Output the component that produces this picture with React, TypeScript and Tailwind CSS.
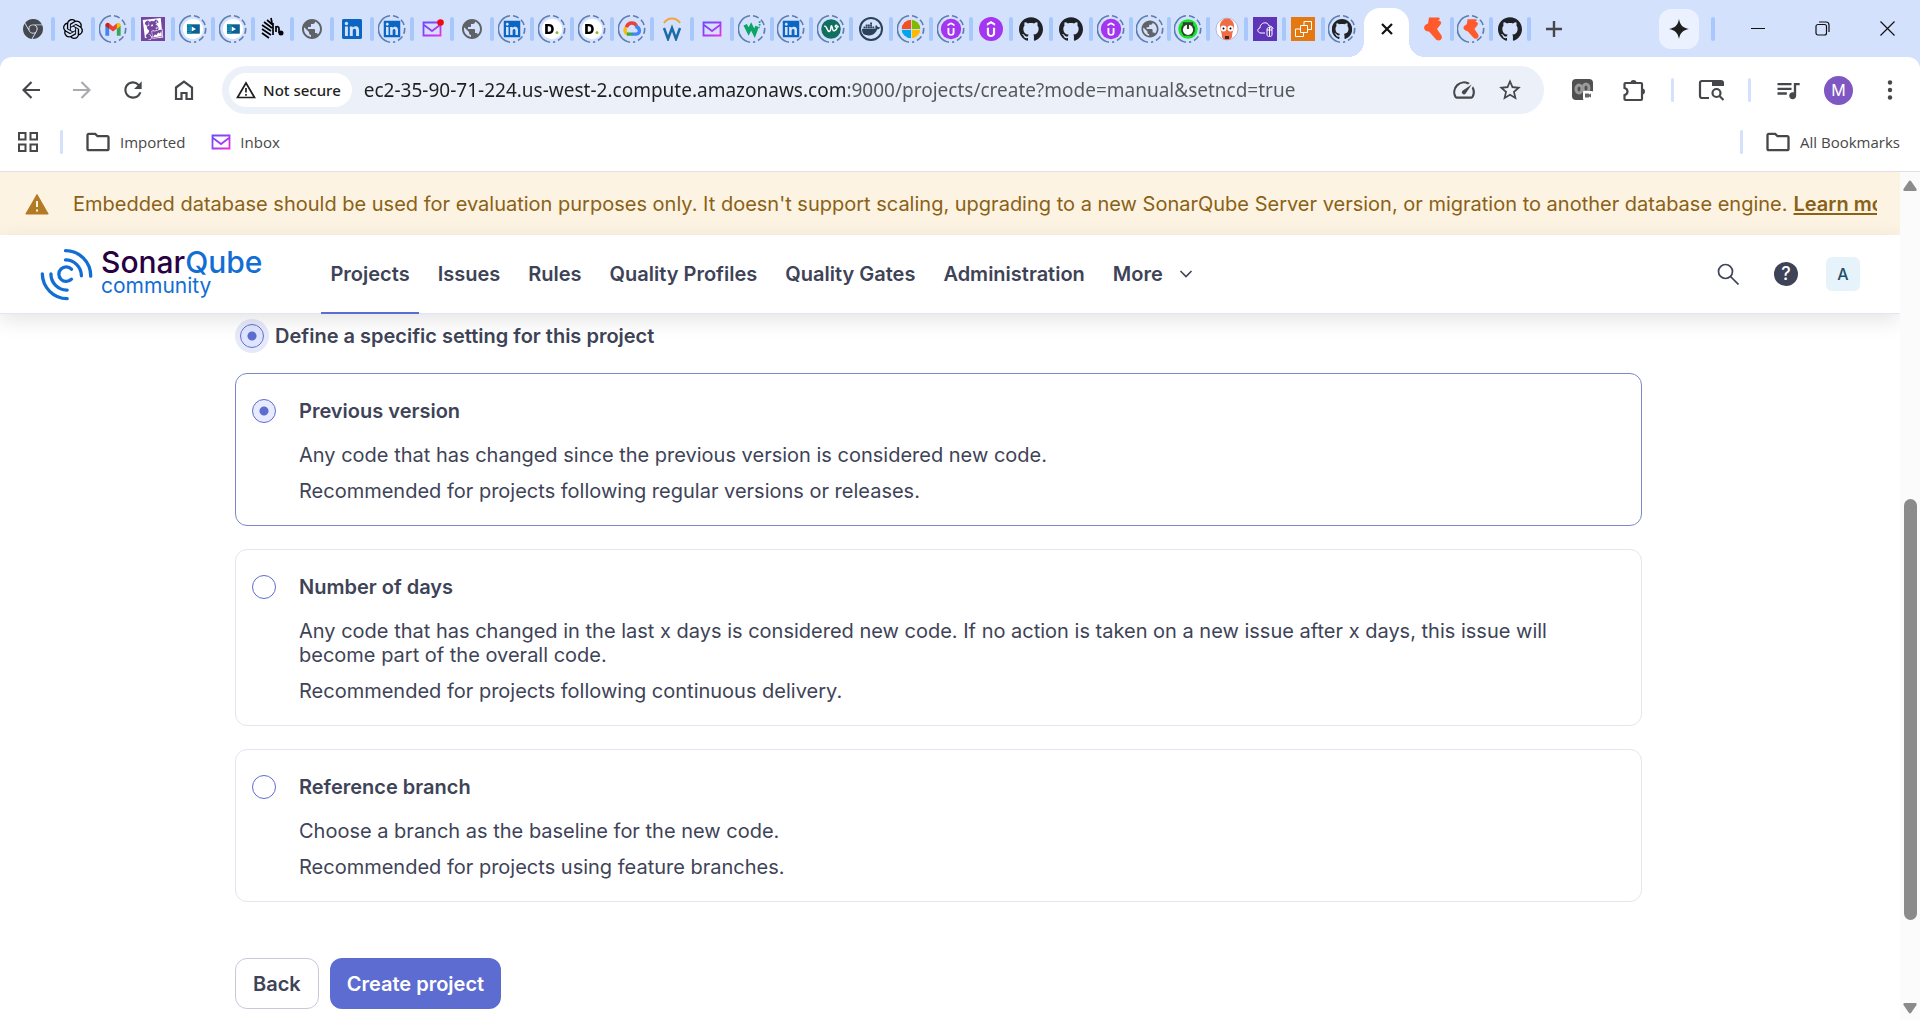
import { useState, type ReactNode } from "react";
import { SiDatadog, SiDocker, SiGithub, SiGooglechrome, SiLinkedin, SiOpenai, SiUdemy } from "react-icons/si";
import { MdOutlineFolder, MdOutlineSpeed, MdPublic, MdQueueMusic, MdRefresh, MdStarBorder } from "react-icons/md";

/* ---------- Favicons ---------- */

const Chrome = () => <SiGooglechrome className="size-5 text-[#45494d]" />;
const OpenAi = () => <SiOpenai className="size-5 text-black" />;
const Globe = () => <MdPublic className="size-6 text-[#5f6368]" />;
const LinkedIn = () => <SiLinkedin className="size-5 text-[#0a66c2]" />;
const GitHub = () => <SiGithub className="size-6 text-[#1f2328]" />;
const Datadog = () => (
  <span className="flex size-6 items-center justify-center bg-[#7446a0]">
    <SiDatadog className="size-[22px] text-white" />
  </span>
);
const Udemy = () => (
  <span className="flex size-6 items-center justify-center rounded-full bg-[#a435f0]">
    <SiUdemy className="size-4 text-white" />
  </span>
);
const Gmail = () => (
  <svg viewBox="0 0 24 24" className="size-6" fill="none">
    <path d="M3 8v12h4.500v-9z" fill="#4285f4" />
    <path d="M21 8v12h-4.500v-9z" fill="#34a853" />
    <path d="M7 5l5 4 5-4v6l-5 4-5-4z" fill="#ea4335" />
    <path d="M16.500 5.300C18.500 3.500 21 5 21 7.500v1L16.500 12z" fill="#fbbc04" />
    <path d="M7.500 5.300C5.500 3.500 3 5 3 7.500v1L7.500 12z" fill="#c5221f" />
  </svg>
);
const Course = () => (
  <svg viewBox="0 0 24 24" className="size-6">
    <circle cx="12" cy="12" r="12" fill="#fff" />
    <rect x="5" y="6.500" width="15" height="11" fill="#0b5f92" />
    <path d="M5 6.500h5v11H5z" fill="#1593ba" />
    <path d="M5 9h4M5 12h3M5 15h4" stroke="#0b5f92" />
    <path d="M10.500 9v6l5-3z" fill="#fff" />
  </svg>
);
const Stripes = () => (
  <svg viewBox="0 0 24 24" className="size-6" fill="none" stroke="#000" strokeWidth="1.700">
    <path d="M11 1l1 5M7 3l6 5M4 5l8 6M2 8l9 6M2 12l9 6M2 16l7 5M13 6v12M16 9v6M16 10c2-1 3 0 3 2v4" />
    <circle cx="21" cy="16" r="2.500" fill="#000" stroke="none" />
  </svg>
);
const Mail = ({ dot = false }: { dot?: boolean }) => (
  <svg viewBox="0 0 24 24" className="size-6" fill="none">
    <defs>
      <linearGradient id="mail-ink" x1="0" y1="0" x2="1" y2="1">
        <stop offset="0" stopColor="#6d4aff" />
        <stop offset="0.5" stopColor="#9b3df5" />
        <stop offset="1" stopColor="#f02fe0" />
      </linearGradient>
    </defs>
    <path d="M3.500 5.500h17v13h-17zM4 8l8 6 8-6" stroke="url(#mail-ink)" strokeWidth="1.800" />
    {dot && <circle cx="20.500" cy="5.500" r="3.300" fill="#f5090f" />}
  </svg>
);
const LetterD = () => (
  <span className="flex size-6 items-center justify-center rounded-full bg-white font-['Inter',sans-serif] text-base font-black text-black">
    D<span className="text-[#86bc25]">.</span>
  </span>
);
const Cloud = () => (
  <svg viewBox="0 0 24 24" className="size-6" fill="none" strokeWidth="4">
    <path d="M7 18a4.500 4.500 0 0 1-2-7.500" stroke="#fbbc04" />
    <path d="M5.500 10C7 4 15 3 17.500 9" stroke="#ea4335" />
    <path d="M16 9c6 1 6 9 1 9h-5" stroke="#4285f4" />
    <path d="M12.500 18H6" stroke="#34a853" />
  </svg>
);
const ArcW = () => (
  <svg viewBox="0 0 24 24" className="size-6" fill="none">
    <path d="M4 6c4-6 12-6 16 0" stroke="#f2a33c" strokeWidth="2" />
    <path d="M4 11l4 11 4-11 4 11 4-11" stroke="#1c6ba8" strokeWidth="2.500" />
  </svg>
);
const GreenW = () => (
  <svg viewBox="0 0 24 24" className="size-6" fill="none">
    <path d="M4 7l4 8 3-6 4 8 3-8" stroke="#0aa566" strokeWidth="4.500" />
    <path d="M20 4h2M20 7h2M20 10h1" stroke="#0aa566" strokeWidth="2" />
  </svg>
);
const Teal = () => (
  <svg viewBox="0 0 24 24" className="size-6" fill="none">
    <circle cx="12" cy="12" r="11.500" fill="#10705f" />
    <path d="M4 9c3-2 3 6 6 6 3-1 1-7 2.500-7S13 15 16 14c4-1 4-7 2-6.500S17 12 21 9" stroke="#fff" strokeWidth="1.700" />
  </svg>
);
const Docker = () => (
  <span className="flex size-6 items-center justify-center rounded-full border-2 border-[#2b4358]">
    <SiDocker className="size-[18px] text-[#2b4358]" />
  </span>
);
const Windows = () => (
  <span className="grid size-[22px] grid-cols-2 gap-px overflow-hidden rounded-full">
    <i className="bg-[#f25022]" />
    <i className="bg-[#7fba00]" />
    <i className="bg-[#00a4ef]" />
    <i className="bg-[#ffb900]" />
  </span>
);
const Timer = () => (
  <svg viewBox="0 0 24 24" className="size-6">
    <circle cx="12" cy="12" r="11.500" fill="#14e62a" />
    <path d="M6 4h12v3l2 3v5l-3 5H7l-3-5v-5l2-3z" fill="#33402f" />
    <circle cx="12" cy="13" r="6" fill="#fff" />
    <path d="M12 6v6" stroke="#33402f" strokeWidth="2.500" />
  </svg>
);
const Argo = () => (
  <svg viewBox="0 0 24 24" className="size-6">
    <circle cx="12" cy="12" r="11" fill="#fff" stroke="#b7b6dd" />
    <path d="M5 9c0-10 14-10 14 0 0 4-2 6-2 11-1 4-9 4-10 0 0-5-2-7-2-11z" fill="#ef6c45" />
    <circle cx="8.500" cy="11.500" r="3" fill="#fff" />
    <circle cx="15.500" cy="11.500" r="3" fill="#fff" />
    <circle cx="8.500" cy="11.500" r="1" />
    <circle cx="15.500" cy="11.500" r="1" />
    <path d="M10 19h4v3h-4z" fill="#3a2522" />
  </svg>
);
const CloudServer = () => (
  <svg viewBox="0 0 24 24" className="size-6" fill="none" stroke="#fff">
    <path d="M0 0h24v24H0z" fill="#5f35b8" stroke="none" />
    <path d="M12 16H8c-4 0-4-5-1-5 0-6 8-7 9-2 3 0 4 2 4 3" />
    <path d="M14 12c0-2 5-2 5 0v6c0 2-5 2-5 0zM14 13h5M16.500 10v9" />
  </svg>
);
const Compute = () => (
  <svg viewBox="0 0 24 24" className="size-6" fill="none" stroke="#fff">
    <path d="M0 0h24v24H0z" fill="#e47911" stroke="none" />
    <path d="M9.500 8.500h7v7h-7zM9 12H4.500v7.500h8V16M13 8V4.500h7.500v8H17" />
  </svg>
);
const Bird = () => (
  <svg viewBox="0 0 24 24" className="size-6" fill="#ff5a2c">
    <path d="M8 .5h10l1 1.500-2 1.500c3 .5 4 2 2.500 4L16 12l4.500 6.500c1.500 3.500-1.500 6-5 4.500L8 14.500c-4 0-7-4-3-7l2-1z" />
  </svg>
);

function Sleeping({ children }: { children: ReactNode }) {
  return (
    <span className="relative flex size-7 items-center justify-center">
      <svg viewBox="0 0 28 28" className="absolute size-7" fill="none" stroke="#5b7db1" strokeWidth="1.600">
        <path d="M12 27.200A13.300 13.300 0 0 1 12 .8" />
        <path d="M15 .8A13.300 13.300 0 0 1 15 27.200" strokeDasharray="6 3" />
      </svg>
      <span className="scale-[.85]">{children}</span>
    </span>
  );
}

type Tab = { name: string; icon: ReactNode; asleep?: boolean };
const tab = (name: string, icon: ReactNode, asleep = false): Tab => ({ name, icon, asleep });

const firstTabs: Tab[] = [
  tab("Chrome", <Chrome />),
  tab("ChatGPT", <OpenAi />),
  tab("Gmail", <Gmail />, true),
  tab("Datadog", <Datadog />),
  tab("Course", <Course />, true),
  tab("Course", <Course />, true),
  tab("Portal", <Stripes />),
  tab("Web page", <Globe />),
  tab("LinkedIn", <LinkedIn />),
  tab("LinkedIn", <LinkedIn />, true),
  tab("New mail", <Mail dot />),
  tab("Web page", <Globe />),
  tab("LinkedIn", <LinkedIn />, true),
  tab("Careers", <LetterD />, true),
  tab("Careers", <LetterD />, true),
  tab("Google Cloud", <Cloud />, true),
  tab("Jobs", <ArcW />),
  tab("Mail", <Mail />),
  tab("Tutorials", <GreenW />, true),
  tab("LinkedIn", <LinkedIn />, true),
  tab("Recruiting", <Teal />, true),
  tab("Docker", <Docker />),
  tab("Microsoft", <Windows />, true),
  tab("Udemy", <Udemy />, true),
  tab("Udemy", <Udemy />),
  tab("GitHub", <GitHub />),
  tab("GitHub", <GitHub />),
  tab("Udemy", <Udemy />, true),
];
const secondTabs: Tab[] = [
  tab("Web page", <Globe />, true),
  tab("Timer", <Timer />, true),
  tab("Argo CD", <Argo />),
  tab("Cloud server", <CloudServer />),
  tab("Compute", <Compute />),
  tab("GitHub", <GitHub />, true),
];
const lastTabs: Tab[] = [tab("Packages", <Bird />), tab("Packages", <Bird />, true), tab("GitHub", <GitHub />)];

function TabGroup({ tabs, closeLast = true }: { tabs: Tab[]; closeLast?: boolean }) {
  return tabs.map((t, i) => (
    <button key={i} aria-label={t.name} className="relative flex h-8 flex-1 items-center justify-center">
      {t.asleep ? <Sleeping>{t.icon}</Sleeping> : t.icon}
      {(closeLast || i < tabs.length - 1) && (
        <span className="absolute -right-0.5 h-6 w-1 rounded-full bg-[#a8c7fa]" />
      )}
    </button>
  ));
}

function TabStrip() {
  return (
    <div className="flex h-[57px] items-center bg-[#d3e1fd]">
      <div className="ml-[13px] flex w-[1118px]">
        <TabGroup tabs={firstTabs} />
      </div>
      <div className="flex w-[230px]">
        <TabGroup tabs={secondTabs} closeLast={false} />
      </div>
      <button
        aria-label="Close tab"
        className="relative mr-[5px] ml-[3px] flex h-[49px] w-[45px] items-center justify-center self-end rounded-t-2xl bg-white pb-2 before:absolute before:bottom-0 before:-left-4 before:size-4 before:bg-[radial-gradient(circle_at_0_0,transparent_16px,white_16px)] after:absolute after:-right-4 after:bottom-0 after:size-4 after:bg-[radial-gradient(circle_at_100%_0,transparent_16px,white_16px)]"
      >
        <svg viewBox="0 0 12 12" className="size-3" stroke="#111" strokeWidth="2.200">
          <path d="M1 1l10 10M11 1L1 11" />
        </svg>
      </button>
      <div className="flex w-[115px]">
        <TabGroup tabs={lastTabs} />
      </div>
      <button aria-label="New tab" className="flex w-[49px] items-center justify-center">
        <svg viewBox="0 0 16 16" className="size-4" stroke="#45474a" strokeWidth="2.400">
          <path d="M8 0v16M0 8h16" />
        </svg>
      </button>
      <button aria-label="Assistant" className="ml-auto flex size-10 items-center justify-center rounded-xl bg-[#ebf1fe]">
        <svg viewBox="0 0 20 20" className="size-5" fill="#1f1f1f">
          <path d="M10 0c1 6 4 9 10 10-6 1-9 4-10 10-1-6-4-9-10-10 6-1 9-4 10-10z" />
        </svg>
      </button>
      <span className="ml-3 h-6 w-1 rounded-full bg-[#a8c7fa]" />
      <button aria-label="Minimize" className="ml-2.5 flex w-[65px] items-center justify-center">
        <svg viewBox="0 0 14 14" className="size-3.5" stroke="#111">
          <path d="M0 6.500h14" />
        </svg>
      </button>
      <button aria-label="Restore" className="flex w-[65px] items-center justify-center">
        <svg viewBox="0 0 15 15" className="size-[15px]" fill="none" stroke="#111" strokeWidth="1.200">
          <rect x="1" y="3.500" width="10.500" height="10.500" rx="2" />
          <path d="M4 1h7a3 3 0 0 1 3 3v7" />
        </svg>
      </button>
      <button aria-label="Close" className="flex w-[65px] items-center justify-center">
        <svg viewBox="0 0 15 15" className="size-[15px]" stroke="#111" strokeWidth="1.200">
          <path d="M.5.5l14 14M14.500.5l-14 14" />
        </svg>
      </button>
    </div>
  );
}

/* ---------- Toolbar ---------- */

function ToolButton({ label, children }: { label: string; children: ReactNode }) {
  return (
    <button aria-label={label} className="flex w-[51px] shrink-0 items-center justify-center">
      {children}
    </button>
  );
}

const ToolDivider = () => (
  <span className="flex w-[26px] shrink-0 justify-center">
    <span className="h-6 w-[3px] rounded-full bg-[#d3e1fd]" />
  </span>
);

const Arrow = () => (
  <svg viewBox="0 0 18 18" className="size-[18px]" fill="none" stroke="currentColor" strokeWidth="2.200">
    <path d="M9.500 1L1.500 9l8 8M1.500 9H18" />
  </svg>
);

function Toolbar() {
  const [url, setUrl] = useState(
    "ec2-35-90-71-224.us-west-2.compute.amazonaws.com:9000/projects/create?mode=manual&setncd=true",
  );
  return (
    <div className="flex h-[66px] items-center pr-[5px] pl-[5px] text-[#45474a]">
      <ToolButton label="Back">
        <Arrow />
      </ToolButton>
      <ToolButton label="Forward">
        <span className="-scale-x-100 text-[#a9abae]">
          <Arrow />
        </span>
      </ToolButton>
      <ToolButton label="Reload">
        <MdRefresh className="size-[26px]" />
      </ToolButton>
      <ToolButton label="Home">
        <svg viewBox="0 0 20 20" className="size-5" fill="none" stroke="currentColor" strokeWidth="2.200">
          <path d="M2 7.500L10 1.500l8 6V19h-5.500v-6h-5v6H2z" />
        </svg>
      </ToolButton>
      <div className="mr-[13px] ml-[13px] flex h-12 flex-1 items-center rounded-full bg-[#ebf0f9] pr-[11px] pl-[7px]">
        <button className="flex h-[34px] shrink-0 items-center gap-[7px] rounded-full bg-white px-[7px] font-['Noto_Sans',sans-serif] text-[15px] font-medium text-[#1f1f1f]">
          <svg viewBox="0 0 20 18" className="h-[18px] w-5" fill="none" stroke="currentColor" strokeWidth="1.700">
            <path d="M10 2L1.500 16.500h17z" />
            <path d="M10 7v4.500M10 13v1.700" />
          </svg>
          <span className="pr-1">Not secure</span>
        </button>
        <input
          aria-label="Address"
          value={url}
          onChange={(e) => setUrl(e.target.value)}
          className="ml-3 min-w-0 flex-1 bg-[linear-gradient(to_right,#1f1f1f_484px,#53565a_484px)] bg-clip-text font-['Noto_Sans',sans-serif] text-[19px] text-transparent caret-black outline-none"
        />
        <button aria-label="Performance" className="flex w-[46px] items-center justify-center">
          <MdOutlineSpeed className="size-[26px]" />
        </button>
        <button aria-label="Bookmark this page" className="flex w-[46px] items-center justify-center">
          <MdStarBorder className="size-[26px]" />
        </button>
      </div>
      <ToolButton label="Recorder extension">
        <svg viewBox="0 0 22 22" className="size-[22px]" fill="none">
          <rect width="21" height="21" rx="4" fill="#505050" />
          <ellipse cx="7" cy="10" rx="3" ry="4" stroke="#9a9a9a" strokeWidth="3" />
          <ellipse cx="14" cy="9" rx="3" ry="4" stroke="#9a9a9a" strokeWidth="3" />
          <rect x="11" y="12" width="10" height="9" rx="1" fill="#fff" />
          <path d="M13 14.500h4v1l2-1v4l-2-1v1h-4z" fill="#666" />
        </svg>
      </ToolButton>
      <ToolButton label="Extensions">
        <svg viewBox="0 0 24 24" className="size-6" fill="none" stroke="currentColor" strokeWidth="2.200">
          <path d="M2.500 6a1 1 0 0 1 1-1H19a1 1 0 0 1 1 1v15a1 1 0 0 1-1 1H3.500a1 1 0 0 1-1-1v-4c4-1 4-6 0-7z" />
          <path d="M8.500 5a3 3 0 0 1 6 0zM20 10.500a3 3 0 0 1 0 6z" fill="currentColor" stroke="none" />
        </svg>
      </ToolButton>
      <ToolDivider />
      <ToolButton label="Search with image">
        <svg viewBox="0 0 26 22" className="h-[22px] w-[26px]" fill="none" stroke="currentColor" strokeWidth="2.200">
          <path d="M11 19H4a2 2 0 0 1-2-2V4a2 2 0 0 1 2-2h19a2 2 0 0 1 2 2v3" />
          <path d="M14 2h11v5H14z" fill="currentColor" stroke="none" />
          <circle cx="18.500" cy="14" r="4" />
          <path d="M21.500 17l4 4" />
        </svg>
      </ToolButton>
      <ToolDivider />
      <ToolButton label="Media controls">
        <MdQueueMusic className="size-7" />
      </ToolButton>
      <ToolButton label="Profile">
        <span className="flex size-[29px] items-center justify-center rounded-full bg-[#7e57c2] font-['Inter',sans-serif] text-base text-white">
          M
        </span>
      </ToolButton>
      <ToolButton label="Menu">
        <svg viewBox="0 0 6 20" className="h-5 w-1.5" fill="currentColor">
          <circle cx="3" cy="2.500" r="2.200" />
          <circle cx="3" cy="10" r="2.200" />
          <circle cx="3" cy="17.500" r="2.200" />
        </svg>
      </ToolButton>
    </div>
  );
}

function BookmarksBar() {
  return (
    <div className="flex h-[49px] items-center border-b border-[#dfe1e5] pr-5 pb-2.5 pl-[18px] font-['Open_Sans',sans-serif] text-[15px] text-[#474747]">
      <button aria-label="Tab groups">
        <svg viewBox="0 0 20 20" className="size-5" fill="none" stroke="currentColor" strokeWidth="2">
          <path d="M1 1h6.500v6.500H1zM12.500 1H19v6.500h-6.500zM1 12.500h6.500V19H1zM12.500 12.500H19V19h-6.500z" />
        </svg>
      </button>
      <span className="ml-[22px] h-6 w-[3px] rounded-full bg-[#d3e1fd]" />
      <button className="ml-[21px] flex items-center gap-2">
        <MdOutlineFolder className="size-7" />
        Imported
      </button>
      <a href="#inbox" className="ml-6 flex items-center gap-[7px]">
        <Mail />
        Inbox
      </a>
      <span className="ml-auto h-6 w-[3px] rounded-full bg-[#d3e1fd]" />
      <button className="ml-[21px] flex items-center gap-2">
        <MdOutlineFolder className="size-7" />
        All Bookmarks
      </button>
    </div>
  );
}

/* ---------- Application ---------- */

function Banner() {
  return (
    <div className="bg-[#fcf3e2] pr-[23px] pl-[25px] text-xl leading-6 text-[#8a6116]">
      <div className="flex h-[63px] items-center overflow-hidden whitespace-nowrap">
        <svg viewBox="0 0 24 22" className="mr-6 h-[22px] w-6 shrink-0">
          <path d="M12 1.500L.8 21h22.400z" fill="#b27a25" stroke="#b27a25" strokeLinejoin="round" />
          <path d="M12 8v6M12 16.500v2" stroke="#fcf3e2" strokeWidth="2" />
        </svg>
        <p>
          Embedded database should be used for evaluation purposes only. It doesn't support scaling, upgrading to a new
          SonarQube Server version, or migration to another database engine.
        </p>
        <a href="#learn" className="ml-1.5 font-semibold underline underline-offset-2">
          Learn more
        </a>
      </div>
    </div>
  );
}

function Logo() {
  return (
    <a href="#home" aria-label="SonarQube community" className="flex items-center gap-2 text-[#126ed3]">
      <svg viewBox="0 0 160 160" className="size-[53px]" fill="none" stroke="currentColor" strokeWidth="10" strokeLinecap="round">
        <path d="M77 8a76 76 0 0 1 76 77M77 36a48 48 0 0 1 48 48" />
        <path d="M7 78a76 76 0 0 0 75 75M33 78a48 48 0 0 0 49 49" />
        <path d="M95 64a22 22 0 1 0 0 30" />
      </svg>
      <span className="flex flex-col">
        <span className="text-[30px] leading-6 font-medium">
          <span className="text-[#290042]">Sonar</span>Qube
        </span>
        <span className="text-[21px] leading-6">community</span>
      </span>
    </a>
  );
}

const navItems = ["Projects", "Issues", "Rules", "Quality Profiles", "Quality Gates", "Administration"];

function Header() {
  return (
    <header className="relative z-10 flex h-[79px] items-center border-b border-[#e1e6f3] bg-white pr-10 pl-10 text-[#3e4357] shadow-[0_6px_20px_0_rgba(0,0,0,0.11)]">
      <Logo />
      <nav className="ml-[59px] flex gap-2.5 self-stretch text-xl leading-6 font-semibold">
        {navItems.map((item, i) => (
          <a
            key={item}
            href="#nav"
            className={
              i === 0
                ? "-mb-px flex items-center border-b-2 border-[#5d6cd0] px-[9px]"
                : "-mb-px flex items-center border-b-2 border-transparent px-[9px]"
            }
          >
            {item}
          </a>
        ))}
        <button className="flex items-center gap-4 px-[9px]">
          More
          <svg viewBox="0 0 14 8" className="h-2 w-3.5" fill="none" stroke="currentColor" strokeWidth="1.600">
            <path d="M1.500 1L7 6.500 12.500 1" />
          </svg>
        </button>
      </nav>
      <div className="ml-auto flex items-center">
        <button aria-label="Search">
          <svg viewBox="0 0 22 22" className="size-[22px]" fill="none" stroke="currentColor" strokeWidth="1.700">
            <circle cx="8.500" cy="8.500" r="7" />
            <path d="M13.500 13.500l8 8" />
          </svg>
        </button>
        <button
          aria-label="Help"
          className="ml-[35px] flex size-6 items-center justify-center rounded-full bg-[#3e4357] text-lg leading-6 font-medium text-white"
        >
          ?
        </button>
        <button className="ml-7 flex size-[34px] items-center justify-center rounded-md bg-[#e6f3fb] text-base font-medium text-[#1f4e6b]">
          A
        </button>
      </div>
    </header>
  );
}

type Option = { id: string; title: string; lines: string[] };

const options: Option[] = [
  {
    id: "previous",
    title: "Previous version",
    lines: [
      "Any code that has changed since the previous version is considered new code.",
      "Recommended for projects following regular versions or releases.",
    ],
  },
  {
    id: "days",
    title: "Number of days",
    lines: [
      "Any code that has changed in the last x days is considered new code. If no action is taken on a new issue after x days, this issue will become part of the overall code.",
      "Recommended for projects following continuous delivery.",
    ],
  },
  {
    id: "branch",
    title: "Reference branch",
    lines: [
      "Choose a branch as the baseline for the new code.",
      "Recommended for projects using feature branches.",
    ],
  },
];

const radioClass =
  "size-6 shrink-0 appearance-none rounded-full border border-[#5d6cd0] bg-white checked:bg-[radial-gradient(circle,#5d6cd0_4px,#e8ebff_5px)]";

function ProjectForm() {
  const [selected, setSelected] = useState("previous");
  return (
    <form className="pt-2.5 pr-[258px] pl-[235px] text-xl leading-6 text-[#3e4357]" onSubmit={(e) => e.preventDefault()}>
      <label className="flex items-center gap-[11px] pl-[5px] font-semibold">
        <input
          type="radio"
          name="scope"
          defaultChecked
          className="size-6 shrink-0 appearance-none rounded-full border border-[#5d6cd0] bg-[radial-gradient(circle,#5d6cd0_4px,#dfe4ff_5px)] ring-5 ring-[#e6e9fa]"
        />
        Define a specific setting for this project
      </label>
      <div className="mt-[25px] flex flex-col gap-[23px]">
        {options.map((o) => (
          <label
            key={o.id}
            className={
              o.id === selected
                ? "flex gap-[23px] rounded-xl border border-[#7b87c9] pt-[25px] pr-10 pb-[22px] pl-4"
                : "flex gap-[23px] rounded-xl border border-[#e4e6ef] pt-[25px] pr-10 pb-[22px] pl-4"
            }
          >
            <input
              type="radio"
              name="new-code"
              checked={o.id === selected}
              onChange={() => setSelected(o.id)}
              className={radioClass}
            />
            <span className="flex flex-col gap-3">
              <span className="pb-2 font-semibold">{o.title}</span>
              {o.lines.map((line) => (
                <span key={line}>{line}</span>
              ))}
            </span>
          </label>
        ))}
      </div>
      <div className="mt-14 flex gap-[11px] font-semibold">
        <button type="button" className="h-[51px] rounded-xl border border-[#c6c9dc] px-[17px]">
          Back
        </button>
        <button type="submit" className="h-[51px] rounded-xl bg-[#5d6cd0] px-[17px] text-white">
          Create project
        </button>
      </div>
    </form>
  );
}

function ScrollTrack() {
  return (
    <div className="flex w-5 shrink-0 flex-col items-center bg-[#fbfbfc] pt-2 pb-1.5 text-[#8b8b8b]">
      <svg viewBox="0 0 14 11" className="h-[11px] w-3.5" fill="currentColor">
        <path d="M6 1a1.500 1.500 0 0 1 2 0l5.500 8c.5 1 0 2-1 2h-11c-1 0-1.500-1-1-2z" />
      </svg>
      <span className="grow-[308]" />
      <span className="w-[13px] grow-[421] rounded-full bg-[#8b8b8b]" />
      <span className="grow-[83]" />
      <svg viewBox="0 0 14 11" className="h-[11px] w-3.5 rotate-180" fill="currentColor">
        <path d="M6 1a1.500 1.500 0 0 1 2 0l5.500 8c.5 1 0 2-1 2h-11c-1 0-1.500-1-1-2z" />
      </svg>
    </div>
  );
}

export default function App() {
  return (
    <div className="flex h-screen flex-col overflow-hidden bg-white font-['Inter',sans-serif]">
      <TabStrip />
      <div className="bg-[#d3e1fd]">
        <div className="rounded-t-xl bg-white">
          <Toolbar />
          <BookmarksBar />
        </div>
      </div>
      <div className="flex min-h-0 flex-1">
        <div className="min-w-0 flex-1 overflow-hidden">
          <Banner />
          <Header />
          <ProjectForm />
        </div>
        <ScrollTrack />
      </div>
    </div>
  );
}
